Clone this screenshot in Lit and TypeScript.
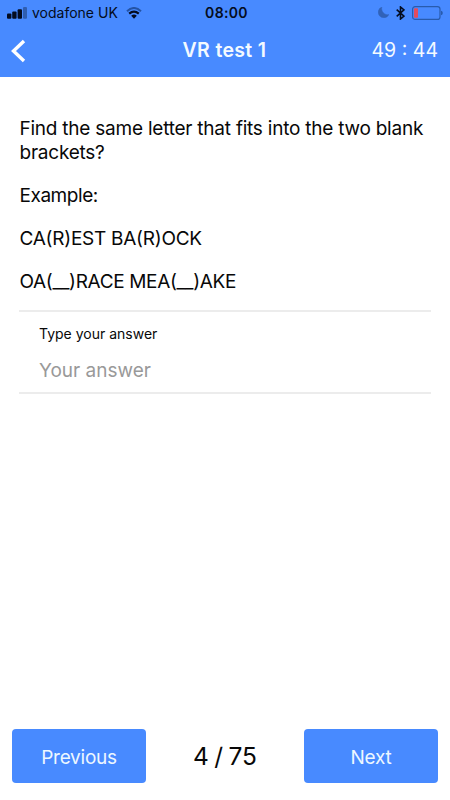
import { LitElement, html, css } from "lit";
import { customElement, state } from "lit/decorators.js";

@customElement("status-bar")
class StatusBar extends LitElement {
  static styles = css`
    :host {
      display: grid;
      grid-template-columns: 1fr auto 1fr;
      align-items: center;
      height: 25px;
      padding: 0 7px 0 7px;
      color: #040c20;
      font-size: 14px;
      line-height: 25px;
    }
    svg { display: block; flex: none; }
    .left, .right { display: flex; align-items: center; }
    .carrier { margin: 0 8px 0 5px; letter-spacing: 0; white-space: nowrap; }
    .clock { font-weight: 600; letter-spacing: 0.35px; margin-left: 3px; }
    .right { justify-content: flex-end; }
    .moon { margin-right: 7px; }
    .bluetooth { margin-right: 7px; }
  `;

  render() {
    return html`
      <div class="left">
        <svg width="20" height="12" viewBox="0 0 20 12" fill="#040c20">
          <rect x="0" y="6.6" width="4.4" height="5.2" rx="1" />
          <rect x="5.2" y="4.6" width="4.4" height="7.2" rx="1" />
          <rect x="10.6" y="2.2" width="4.4" height="9.6" rx="1" />
          <rect x="16" y="0" width="4" height="11.8" rx="1" opacity="0.35" />
        </svg>
        <span class="carrier">vodafone UK</span>
        <svg width="16" height="12" viewBox="0 0 16 12" fill="none">
          <path d="M1 4.2Q8-2.2 15 4.2" stroke="#2453a5" stroke-width="2" />
          <path d="M3.2 6.7Q8 2.5 12.8 6.7" stroke="#040c20" stroke-width="2.2" />
          <path d="M5.2 8.8Q8 6.4 10.8 8.8L8 11.8Z" fill="#040c20" />
        </svg>
      </div>
      <span class="clock">08:00</span>
      <div class="right">
        <svg class="moon" width="11" height="11" viewBox="0 0 11 11">
          <path d="M3.8 0A5.6 5.6 0 1 0 10.9 7.6A6.2 6.2 0 0 1 3.8 0Z" fill="#3162b8" stroke="#3162b8" stroke-width=".5" />
        </svg>
        <svg class="bluetooth" width="9" height="14" viewBox="0 0 9 14">
          <path d="M.7 3.7L8 10.1L4.5 13V1L8 3.9L.7 10.3" fill="none" stroke="#040c20" stroke-width="1.6" />
        </svg>
        <svg width="31" height="14" viewBox="0 0 31 14">
          <rect x=".6" y=".6" width="27.4" height="12.8" rx="2.5" fill="none" stroke="#285bad" stroke-width="1.2" />
          <rect x="2" y="2.2" width="4" height="9.6" rx=".8" fill="#e34b5d" />
          <path d="M29 4.7Q30.8 5.2 30.8 7Q30.8 8.8 29 9.3Z" fill="#285bad" />
        </svg>
      </div>
    `;
  }
}

@customElement("app-root")
class AppRoot extends LitElement {
  static styles = css`
    :host {
      display: flex;
      flex-direction: column;
      height: 800px;
      box-sizing: border-box;
      background: #fff;
      color: #080808;
      font-family: Inter, "Liberation Sans", sans-serif;
    }
    .top { height: 77px; background: #488aff; flex: none; }
    .nav {
      display: grid;
      grid-template-columns: 1fr auto 1fr;
      align-items: center;
      height: 50px;
      padding: 0 12px 0 11px;
      color: #f4faff;
    }
    .back { display: block; position: relative; top: 1px; }
    .title { font-size: 19.5px; font-weight: 600; letter-spacing: 0.35px; }
    .timer { font-size: 19.5px; text-align: right; white-space: nowrap; }
    .content { flex: 1; padding: 39.5px 19px 0 19px; font-size: 19px; line-height: 24px; }
    p { margin: 0 0 19.2px; padding-left: 0.5px; white-space: nowrap; }
    .question { letter-spacing: -0.23px; }
    .example { letter-spacing: -0.45px; }
    .sample { letter-spacing: -0.26px; }
    .puzzle { letter-spacing: -0.34px; }
    .field {
      display: flex;
      flex-direction: column;
      box-sizing: border-box;
      height: 84px;
      margin-top: -3px;
      padding: 12px 20px 0;
      border-top: 2px solid #ececec;
      border-bottom: 2px solid #ececec;
    }
    .label { font-size: 14px; line-height: 20px; }
    .entry {
      margin-top: 12px;
      padding: 0;
      border: 0;
      outline: 0;
      background: none;
      font: 19px/30px Inter, "Liberation Sans", sans-serif;
      color: #080808;
    }
    .entry::placeholder { color: #999; opacity: 1; }
    .footer {
      display: grid;
      grid-template-columns: 134px 1fr 134px;
      align-items: center;
      height: 54px;
      padding: 0 12px 17px;
      text-align: center;
    }
    .button {
      height: 54px;
      padding: 2px 0 0;
      border: 0;
      border-radius: 4px;
      background: #488aff;
      color: #edf7ff;
      font: 19px Inter, "Liberation Sans", sans-serif;
      letter-spacing: -0.25px;
    }
    .progress { padding-bottom: 1px; font-size: 24.5px; word-spacing: -1.5px; white-space: nowrap; }
  `;

  @state() private current = 4;
  private total = 75;

  private go(step: number) {
    this.current = Math.min(this.total, Math.max(1, this.current + step));
  }

  render() {
    return html`
      <header class="top">
        <status-bar></status-bar>
        <div class="nav">
          <svg class="back" width="16" height="24" viewBox="0 0 16 24">
            <path d="M13 2L2.5 12L13 22" fill="none" stroke="#fff" stroke-width="3.4" />
          </svg>
          <span class="title">VR test 1</span>
          <span class="timer">49 : 44</span>
        </div>
      </header>
      <main class="content">
        <p class="question">Find the same letter that fits into the two blank<br />brackets?</p>
        <p class="example">Example:</p>
        <p class="sample">CA(R)EST BA(R)OCK</p>
        <p class="puzzle">OA(__)RACE MEA(__)AKE</p>
        <label class="field">
          <span class="label">Type your answer</span>
          <input class="entry" placeholder="Your answer" />
        </label>
      </main>
      <footer class="footer">
        <button class="button prev" @click=${() => this.go(-1)}>Previous</button>
        <span class="progress">${this.current} / ${this.total}</span>
        <button class="button next" @click=${() => this.go(1)}>Next</button>
      </footer>
    `;
  }
}
